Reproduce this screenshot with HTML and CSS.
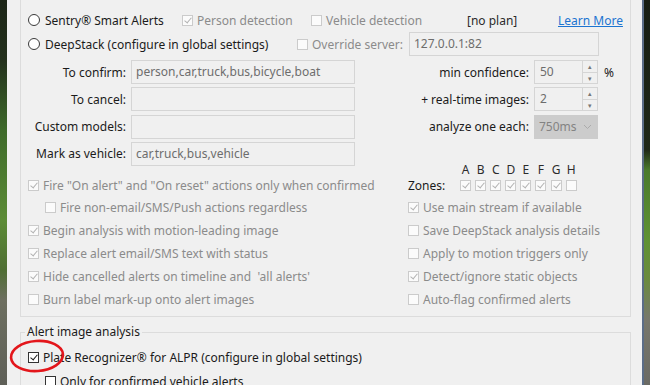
FILE: index.html
```html
<!DOCTYPE html>
<html>
<head>
    <title>Camera settings - AI</title>
    <link rel="stylesheet" href="styles.css">
</head>
<body>
    <div class="desktop">
        <div class="photo photo-left"></div>
        <div class="window">
            <div class="group">
                <div class="row">
                    <label class="opt w-sentry"><span class="radio"></span>Sentry® Smart Alerts</label>
                    <label class="opt w-person disabled"><span class="check on"></span>Person detection</label>
                    <label class="opt w-vehicle disabled"><span class="check"></span>Vehicle detection</label>
                    <span class="plan">[no plan]</span>
                    <a class="link" href="#">Learn More</a>
                </div>
                <div class="row">
                    <label class="opt w-deepstack"><span class="radio"></span>DeepStack (configure in global settings)</label>
                    <label class="opt w-override disabled"><span class="check"></span>Override server:</label>
                    <div class="field field-server">127.0.0.1:82</div>
                </div>

                <div class="form-grid">
                    <span class="label">To confirm:</span>
                    <div class="field">person,car,truck,bus,bicycle,boat</div>
                    <span class="label">min confidence:</span>
                    <div class="spin"><span class="spin-value">50</span><span class="spin-btns"><i>&#9652;</i><i>&#9662;</i></span></div>
                    <span class="unit">%</span>

                    <span class="label">To cancel:</span>
                    <div class="field"></div>
                    <span class="label">+ real-time images:</span>
                    <div class="spin"><span class="spin-value">2</span><span class="spin-btns"><i>&#9652;</i><i>&#9662;</i></span></div>
                    <span></span>

                    <span class="label">Custom models:</span>
                    <div class="field"></div>
                    <span class="label">analyze one each:</span>
                    <div class="combo"><span>750ms</span><svg width="9" height="6" viewBox="0 0 9 6"><path d="M1 1l3.5 3.5L8 1" fill="none" stroke="#ababab" stroke-width="1"/></svg></div>
                    <span></span>

                    <span class="label">Mark as vehicle:</span>
                    <div class="field">car,truck,bus,vehicle</div>
                    <span></span>
                    <span></span>
                    <span></span>
                </div>

                <div class="check-grid">
                    <div class="col-left">
                        <span class="spacer"></span>
                        <label class="opt disabled"><span class="check on"></span>Fire "On alert" and "On reset" actions only when confirmed</label>
                        <label class="opt disabled indent"><span class="check"></span>Fire non-email/SMS/Push actions regardless</label>
                        <label class="opt disabled"><span class="check on"></span>Begin analysis with motion-leading image</label>
                        <label class="opt disabled"><span class="check on"></span>Replace alert email/SMS text with status</label>
                        <label class="opt disabled"><span class="check on"></span>Hide cancelled alerts on timeline and &nbsp;'all alerts'</label>
                        <label class="opt disabled"><span class="check"></span>Burn label mark-up onto alert images</label>
                    </div>
                    <div class="col-right">
                        <div class="zone-letters">
                            <span>A</span><span>B</span><span>C</span><span>D</span><span>E</span><span>F</span><span>G</span><span>H</span>
                        </div>
                        <div class="zones">
                            <span class="zones-label">Zones:</span>
                            <span class="check on"></span><span class="check on"></span><span class="check on"></span><span class="check on"></span>
                            <span class="check on"></span><span class="check on"></span><span class="check on"></span><span class="check"></span>
                        </div>
                        <label class="opt disabled"><span class="check on"></span>Use main stream if available</label>
                        <label class="opt disabled"><span class="check"></span>Save DeepStack analysis details</label>
                        <label class="opt disabled"><span class="check"></span>Apply to motion triggers only</label>
                        <label class="opt disabled"><span class="check on"></span>Detect/ignore static objects</label>
                        <label class="opt disabled"><span class="check"></span>Auto-flag confirmed alerts</label>
                    </div>
                </div>
            </div>

            <div class="group-lower">
                <span class="group-title">Alert image analysis</span>
                <div class="group-body">
                    <label class="opt"><span class="check on active"></span>Plate Recognizer® for ALPR (configure in global settings)</label>
                    <label class="opt indent"><span class="check active"></span>Only for confirmed vehicle alerts</label>
                </div>
            </div>
        </div>
        <div class="photo photo-right"></div>

        <!-- red marker drawn over the screenshot -->
        <svg class="marker" width="62" height="38" viewBox="0 0 62 38">
            <ellipse cx="29" cy="18" rx="26" ry="15" fill="none" stroke="#e3161b" stroke-width="2.6" transform="rotate(-4 29 18)"/>
        </svg>
    </div>
</body>
</html>
```

FILE: styles.css
```css
* {
    margin: 0;
    padding: 0;
    box-sizing: border-box;
}

body {
    width: 650px;
    height: 385px;
    overflow: hidden;
    font-family: "Segoe UI", "Noto Sans", sans-serif;
    font-size: 12px;
    color: #1b1b1b;
}

.desktop {
    position: relative;
    display: flex;
    width: 650px;
    height: 385px;
    overflow: hidden;
}

.photo {
    flex: 0 0 auto;
    height: 100%;
}

.photo-left {
    width: 7px;
    background: linear-gradient(#1d2618 0, #23301c 60px, #3e6a2a 130px, #5c8c36 220px, #4f6e33 270px, #6d6f60 300px, #5e5f57 385px);
}

.photo-right {
    width: 6px;
    background: linear-gradient(#171d13 0, #1f2818 150px, #4a7a2c 170px, #5f9234 240px, #6b8a3f 280px, #77776c 320px, #6a6a64 385px);
}

.window {
    flex: 0 0 637px;
    height: 100%;
    background: #f0f0f0;
    border-right: 2px solid #5b6d88;
    overflow: hidden;
}

/* upper group box, its top edge is off screen */
.group {
    margin: 0 11px 0 13px;
    height: 317px;
    border: 1px solid #dcdcdc;
    border-top: none;
    padding: 8px 0 0 7px;
}

.row {
    display: flex;
    align-items: center;
    height: 24px;
}

.opt {
    display: flex;
    align-items: center;
    gap: 3px;
    white-space: nowrap;
    height: 23px;
}

.opt.disabled {
    color: #8b8b8b;
}

.w-sentry { width: 154px; }
.w-person { width: 129px; }
.w-vehicle { width: 156px; }
.w-deepstack { width: 269px; }
.w-override { width: 112px; }

.plan {
    width: 91px;
    color: #2b2b2b;
}

.link {
    color: #1c74d1;
    text-decoration: underline;
}

.radio {
    flex: 0 0 auto;
    width: 12px;
    height: 12px;
    margin-right: 2px;
    border: 1px solid #3a3a3a;
    border-radius: 50%;
    background: #fff;
}

.check {
    position: relative;
    flex: 0 0 auto;
    width: 11px;
    height: 11px;
    margin-right: 1px;
    border: 1px solid #cbcbcb;
    background: #fbfbfb;
}

.check.on::after {
    content: "";
    position: absolute;
    left: 3px;
    top: 0;
    width: 3px;
    height: 6px;
    border: solid #b2b2b2;
    border-width: 0 1px 1px 0;
    transform: rotate(40deg);
}

.check.active {
    border-color: #333;
    background: #fff;
}

.check.active.on::after {
    border-color: #1b1b1b;
    border-width: 0 1.5px 1.5px 0;
}

.field {
    height: 24px;
    border: 1px solid #d5d5d5;
    background: #f0f0f0;
    color: #6d6d6d;
    padding: 0 4px;
    line-height: 22px;
    white-space: nowrap;
    overflow: hidden;
}

.field-server {
    width: 190px;
}

.form-grid {
    display: grid;
    grid-template-columns: 98px 224px 169px 64px auto;
    grid-auto-rows: 24px;
    column-gap: 5px;
    row-gap: 3.33px;
    align-items: center;
    margin-top: 4px;
}

.form-grid .field {
    align-self: stretch;
}

.label {
    text-align: right;
    white-space: nowrap;
}

.unit {
    padding-left: 1px;
}

.spin {
    display: flex;
    height: 24px;
    border: 1px solid #d5d5d5;
    color: #6d6d6d;
}

.spin-value {
    flex: 1;
    padding-left: 5px;
    line-height: 22px;
}

.spin-btns {
    display: flex;
    flex-direction: column;
    width: 15px;
    border-left: 1px solid #d5d5d5;
}

.spin-btns i {
    flex: 1;
    font-style: normal;
    font-size: 7px;
    line-height: 11px;
    text-align: center;
    color: #777;
}

.spin-btns i + i {
    border-top: 1px solid #d5d5d5;
}

.combo {
    display: flex;
    align-items: center;
    justify-content: space-between;
    height: 24px;
    padding: 0 6px 0 5px;
    background: #cccccc;
    color: #838383;
}

.check-grid {
    display: grid;
    grid-template-columns: 380px auto;
    margin-top: -1px;
}

.col-left,
.col-right {
    display: grid;
    grid-template-rows: 10px 21.5px repeat(5, 23px);
    align-items: center;
}

.indent {
    padding-left: 17px;
}

.zone-letters {
    display: flex;
    gap: 4.1px;
    padding-left: 52px;
    height: 10px;
    line-height: 10px;
    color: #2b2b2b;
}

.zone-letters span {
    width: 11px;
    text-align: center;
}

.zones {
    display: flex;
    align-items: center;
    gap: 4.1px;
}

.zones .check {
    margin-right: 0;
}

.zones-label {
    width: 47.9px;
    color: #1b1b1b;
}

/* lower group, title sits on the top border, bottom is off screen */
.group-lower {
    margin: 15px 11px 0 13px;
    height: 54px;
    border: 1px solid #dcdcdc;
    border-bottom: none;
}

.group-title {
    display: block;
    width: fit-content;
    margin: -9px 0 0 4px;
    padding: 0 2px;
    line-height: 16px;
    background: #f0f0f0;
    color: #1b1b1b;
}

.group-body {
    padding: 5px 0 0 7px;
}

.group-lower .opt {
    height: 24px;
}

.marker {
    position: absolute;
    left: 8px;
    top: 338px;
}
```
